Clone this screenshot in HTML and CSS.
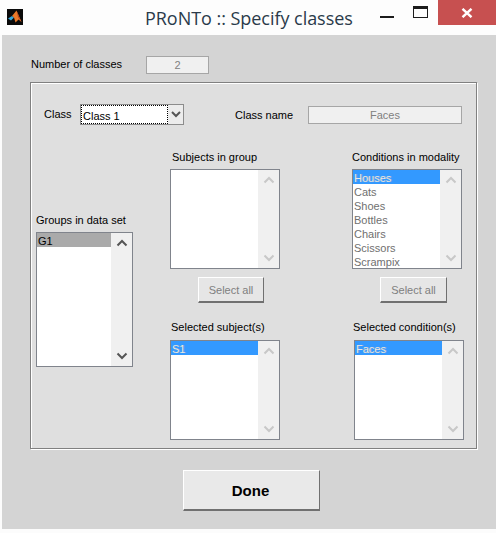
FILE: index.html
```html
<!DOCTYPE html>
<html lang="en">
<head>
<meta charset="utf-8">
<title>PRoNTo :: Specify classes</title>
<link rel="stylesheet" href="styles.css">
</head>
<body>
<div class="window">
  <header class="titlebar">
    <svg class="appicon" width="16" height="16" viewBox="0 0 16 16">
      <rect width="16" height="16" fill="#0a0a0a"/>
      <path d="M1 9.5 5 7 7 8.5 4 11.5Z" fill="#35a5d8"/>
      <path d="M5 7 9.5 1.5 14.5 13 11.5 10.5 8.5 13.5 7 8.5Z" fill="#e8792a"/>
      <path d="M9.5 1.5 11 8 14.5 13Z" fill="#b8401c"/>
    </svg>
    <h1 class="title">PRoNTo :: Specify classes</h1>
    <div class="controls">
      <span class="minimize"></span>
      <span class="maximize"></span>
      <span class="close">
        <svg width="12" height="10" viewBox="0 0 12 10"><path d="M1.5 0.8 10.5 9.2M10.5 0.8 1.5 9.2" stroke="#fff" stroke-width="2.4" fill="none"/></svg>
      </span>
    </div>
  </header>

  <main class="client">
    <div class="count-row">
      <span class="label count-label">Number of classes</span>
      <span class="field field-count">2</span>
    </div>

    <section class="panel">
      <div class="class-row">
        <span class="label class-label">Class</span>
        <div class="combo">
          <span class="combo-text">Class 1</span>
          <span class="combo-arrow">
            <svg width="10" height="7" viewBox="0 0 10 7"><path d="M1 1 5 5 9 1" stroke="#555" stroke-width="2" fill="none"/></svg>
          </span>
        </div>
        <span class="label name-label">Class name</span>
        <span class="field field-name">Faces</span>
      </div>

      <div class="columns">
        <div class="col col-groups">
          <span class="label">Groups in data set</span>
          <div class="list list-groups">
            <ul class="items">
              <li class="item item-grey">G1</li>
            </ul>
            <div class="scroll">
              <svg width="12" height="8" viewBox="0 0 12 8"><path d="M1.5 6.5 6 2 10.5 6.5" stroke="#555" stroke-width="2" fill="none"/></svg>
              <svg width="12" height="8" viewBox="0 0 12 8"><path d="M1.5 1.5 6 6 10.5 1.5" stroke="#555" stroke-width="2" fill="none"/></svg>
            </div>
          </div>
        </div>

        <div class="col col-subjects">
          <span class="label label-mid">Subjects in group</span>
          <div class="list list-short">
            <ul class="items"></ul>
            <div class="scroll">
              <svg width="12" height="8" viewBox="0 0 12 8"><path d="M1.5 6.5 6 2 10.5 6.5" stroke="#c8c8c8" stroke-width="2" fill="none"/></svg>
              <svg width="12" height="8" viewBox="0 0 12 8"><path d="M1.5 1.5 6 6 10.5 1.5" stroke="#c8c8c8" stroke-width="2" fill="none"/></svg>
            </div>
          </div>
          <button class="btn btn-select" type="button">Select all</button>
          <span class="label label-selected label-selected-mid">Selected subject(s)</span>
          <div class="list list-short list-selected">
            <ul class="items">
              <li class="item item-blue">S1</li>
            </ul>
            <div class="scroll">
              <svg width="12" height="8" viewBox="0 0 12 8"><path d="M1.5 6.5 6 2 10.5 6.5" stroke="#c8c8c8" stroke-width="2" fill="none"/></svg>
              <svg width="12" height="8" viewBox="0 0 12 8"><path d="M1.5 1.5 6 6 10.5 1.5" stroke="#c8c8c8" stroke-width="2" fill="none"/></svg>
            </div>
          </div>
        </div>

        <div class="col col-conditions">
          <span class="label">Conditions in modality</span>
          <div class="list list-short">
            <ul class="items">
              <li class="item item-blue">Houses</li>
              <li class="item">Cats</li>
              <li class="item">Shoes</li>
              <li class="item">Bottles</li>
              <li class="item">Chairs</li>
              <li class="item">Scissors</li>
              <li class="item">Scrampix</li>
            </ul>
            <div class="scroll">
              <svg width="12" height="8" viewBox="0 0 12 8"><path d="M1.5 6.5 6 2 10.5 6.5" stroke="#c8c8c8" stroke-width="2" fill="none"/></svg>
              <svg width="12" height="8" viewBox="0 0 12 8"><path d="M1.5 1.5 6 6 10.5 1.5" stroke="#c8c8c8" stroke-width="2" fill="none"/></svg>
            </div>
          </div>
          <button class="btn btn-select btn-select-right" type="button">Select all</button>
          <span class="label label-selected label-selected-right">Selected condition(s)</span>
          <div class="list list-short list-selected list-selected-right">
            <ul class="items">
              <li class="item item-blue">Faces</li>
            </ul>
            <div class="scroll">
              <svg width="12" height="8" viewBox="0 0 12 8"><path d="M1.5 6.5 6 2 10.5 6.5" stroke="#c8c8c8" stroke-width="2" fill="none"/></svg>
              <svg width="12" height="8" viewBox="0 0 12 8"><path d="M1.5 1.5 6 6 10.5 1.5" stroke="#c8c8c8" stroke-width="2" fill="none"/></svg>
            </div>
          </div>
        </div>
      </div>
    </section>

    <div class="done-row">
      <button class="btn btn-done" type="button">Done</button>
    </div>
  </main>
</div>
</body>
</html>
```
FILE: styles.css
```css
* { box-sizing: border-box; }
html, body { margin: 0; padding: 0; background: #fff; }
body {
  width: 501px;
  height: 533px;
  overflow: hidden;
  font-family: "Liberation Sans", Arial, sans-serif;
  font-size: 11px;
  color: #000;
}
.window {
  width: 496px;
  height: 533px;
  display: flex;
  flex-direction: column;
  background: #fcfcfc;
}
.titlebar {
  height: 35px;
  flex: none;
  display: flex;
  align-items: flex-start;
  background: #fdfdfd;
}
.appicon { margin: 9px 0 0 7px; flex: none; }
.title {
  margin: 6px 0 0 122px;
  font-family: "Open Sans", sans-serif;
  font-weight: 400;
  font-size: 18px;
  line-height: 24px;
  color: #2a3a4a;
  white-space: nowrap;
  width: 208px;
  letter-spacing: -0.04px;
}
.controls { margin-left: auto; display: flex; align-items: flex-start; }
.minimize { width: 14px; height: 2px; background: #1c1c1c; margin: 16px 19px 0 0; }
.maximize {
  width: 15px; height: 12px;
  border: 1px solid #1c1c1c; border-top-width: 3px;
  margin: 6px 10px 0 0;
}
.close {
  width: 58px; height: 25px;
  background: #c75050;
  display: flex; align-items: center; justify-content: center;
}
.client {
  flex: none;
  height: 494px;
  margin: 0 0 4px 2px;
  background: #d4d4d4;
  padding: 21px 20px 0 28px;
  display: flex;
  flex-direction: column;
}
.label { display: block; line-height: 14px; white-space: nowrap; }
.count-row { display: flex; align-items: flex-start; height: 18px; margin: 0 0 0 1px; }
.count-label { width: 115px; margin-top: 1px; }
.field {
  display: block;
  height: 18px;
  border: 1px solid #a6a6a6;
  background: #f0f0f0;
  color: #808080;
  text-align: center;
  line-height: 16px;
}
.field-count { width: 63px; }
.panel {
  margin-top: 8px;
  height: 367px;
  width: 447px;
  background: #dfdfdf;
  border: 1px solid #808080;
  box-shadow: inset 1px 1px 0 #fff, 1px 1px 0 #fff;
  padding: 0 0 0 5px;
  flex: none;
}
.class-row { display: flex; align-items: flex-start; height: 67px; padding-top: 21px; }
.class-label { margin: 3px 0 0 8px; width: 36px; }
.combo {
  width: 104px; height: 21px;
  display: flex;
  background: #fff;
  border: 1px solid #8c8c8c;
}
.combo-text {
  width: 87px;
  border: 1px dotted #000;
  padding-left: 1px;
  line-height: 20px;
}
.combo-arrow {
  flex: 1;
  display: flex; align-items: center; justify-content: center;
  background: #ececec;
}
.name-label { margin: 4px 0 0 51px; width: 73px; }
.field-name { width: 154px; margin-top: 2px; }
.columns { display: flex; align-items: flex-start; }
.col { display: flex; flex-direction: column; flex: none; }
.col-groups { width: 134px; padding-top: 63px; }
.col-subjects { width: 182px; }
.label-mid { margin-left: 2px; }
.list {
  display: flex;
  background: #fff;
  border: 1px solid #80848c;
  margin-top: 5px;
}
.list-groups { width: 97px; height: 135px; }
.list-short { width: 110px; height: 100px; }
.items { list-style: none; margin: 0; padding: 0; flex: 1; min-width: 0; overflow: hidden; }
.item {
  height: 14px;
  line-height: 17px;
  padding-left: 1px;
  color: #707070;
}
.item-grey { background: #aaa; color: #000; }
.item-blue { background: #3399ff; color: #e8e8e8; text-shadow: 1px 0 0 #7aa0c8; }
.scroll {
  width: 21px;
  flex: none;
  background: #f0f0f0;
  display: flex;
  flex-direction: column;
  align-items: center;
  justify-content: space-between;
  padding: 6px 0 6px;
}
.btn {
  font: inherit;
  background: #e6e6e6;
  border: 1px solid;
  border-color: #fff #707070 #707070 #fff;
  border-bottom-width: 2px;
  padding: 0;
  cursor: default;
}
.btn-select {
  width: 66px;
  height: 26px;
  margin: 8px 0 0 28px;
  color: #808080;
}
.btn-select-right { margin-left: 28px; width: 67px; }
.label-selected { margin-top: 17px; }
.label-selected-mid { margin-left: 1px; }
.label-selected-right { margin-left: 1px; }
.list-selected { margin-top: 6px; }
.list-selected-right { margin-left: 2px; }
.done-row { padding: 21px 0 0 153px; }
.btn-done {
  width: 137px;
  height: 41px;
  background: #e9e9e9;
  font-weight: 700;
  font-size: 15px;
  color: #000;
  padding-right: 2px;
}
```
